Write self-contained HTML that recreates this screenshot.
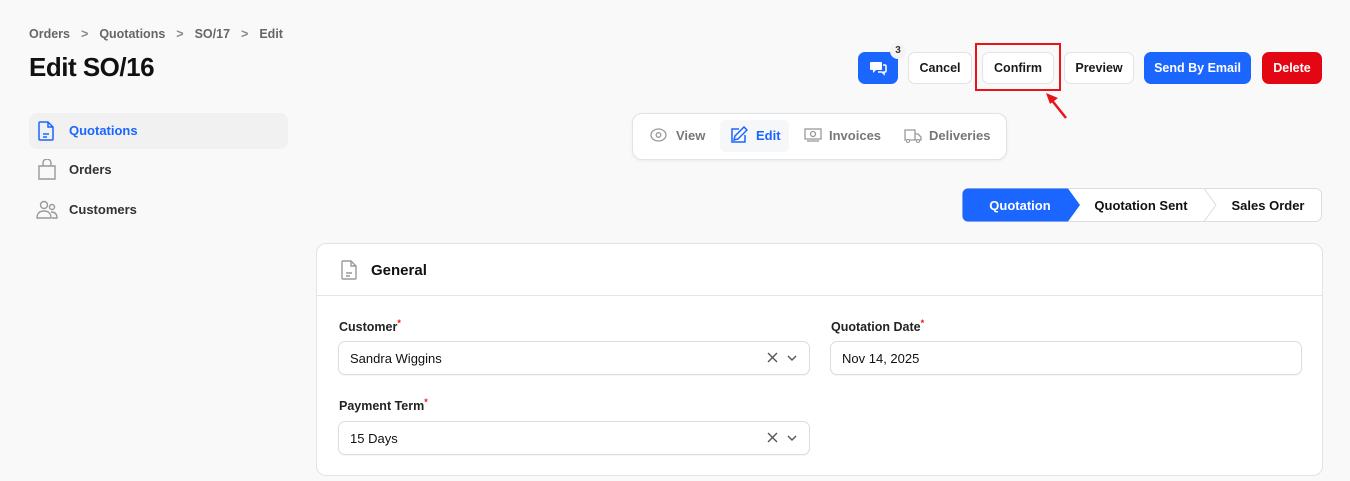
<!DOCTYPE html>
<html><head><style>
*{box-sizing:border-box;margin:0;padding:0}
body{width:1350px;height:481px;background:#f9f9f9;font-family:"Liberation Sans",sans-serif;position:relative;overflow:hidden;color:#111}
.a{position:absolute}
.btn{position:absolute;top:52px;height:32px;border:1px solid #e3e3e3;border-radius:7px;background:#fff;font-size:12.5px;font-weight:bold;display:flex;align-items:center;justify-content:center;color:#1a1a1a}
.lbl{position:absolute;font-size:12.5px;font-weight:bold;color:#222}
.lbl sup{color:#e11;font-size:9px}
.inp{position:absolute;height:34px;border:1px solid #ddd;border-radius:7px;background:#fff;font-size:13px;padding-left:11px;display:flex;align-items:center;box-shadow:0 1px 1px rgba(0,0,0,.04)}
.nav{position:absolute;left:69px;font-size:13px;font-weight:bold;color:#333}
.tab{position:absolute;top:129px;font-size:13px;font-weight:bold;color:#777;line-height:1}
</style></head><body>
<div class="a" style="left:29px;top:27px;font-size:12.5px;font-weight:bold;color:#666">Orders<span style="margin:0 11px;color:#888">&gt;</span>Quotations<span style="margin:0 11px;color:#888">&gt;</span>SO/17<span style="margin:0 11px;color:#888">&gt;</span>Edit</div>
<div class="a" style="left:29px;top:52px;font-size:26px;font-weight:bold;letter-spacing:-0.5px">Edit SO/16</div>

<div class="btn" style="left:858px;width:40px;background:#1a66ff;border-color:#1a66ff">
<svg width="18" height="16" viewBox="0 0 18 16"><path d="M2 2h10a1 1 0 0 1 1 1v6a1 1 0 0 1-1 1H7l-3 3v-3H2a1 1 0 0 1-1-1V3a1 1 0 0 1 1-1z" fill="#fff"/><path d="M14 5h2a1 1 0 0 1 1 1v5a1 1 0 0 1-1 1h-1v2l-2-2h-4" fill="none" stroke="#fff" stroke-width="1.5"/></svg></div>
<div class="a" style="left:890px;top:43px;width:16px;height:16px;border-radius:8px;background:#f3f3f3;font-size:10px;font-weight:bold;text-align:center;line-height:16px;color:#333">3</div>
<div class="btn" style="left:908px;width:64px">Cancel</div>
<div class="btn" style="left:982px;width:72px">Confirm</div>
<div class="a" style="left:975px;top:43px;width:86px;height:48px;border:2px solid #e8141a"></div>
<svg class="a" style="left:1040px;top:88px" width="32" height="34"><path d="M26 30L10 10" stroke="#e8141a" stroke-width="2.5"/><path d="M6 5l12 5-8 6z" fill="#e8141a"/></svg>
<div class="btn" style="left:1064px;width:70px">Preview</div>
<div class="btn" style="left:1144px;width:107px;background:#1a66ff;border-color:#1a66ff;color:#fff">Send By Email</div>
<div class="btn" style="left:1262px;width:60px;background:#e30613;border-color:#e30613;color:#fff">Delete</div>

<div class="a" style="left:29px;top:113px;width:259px;height:36px;background:#f1f1f1;border-radius:8px"></div>
<svg class="a" style="left:37px;top:120px" width="18" height="22" viewBox="0 0 18 22"><path d="M3 2h8l5 5v12a1 1 0 0 1-1 1H3a1 1 0 0 1-1-1V3a1 1 0 0 1 1-1z M11 2v5h5 M6 14h6 M6 17h4" fill="none" stroke="#1a66ff" stroke-width="1.5"/></svg>
<div class="nav" style="top:123px;color:#1a66ff">Quotations</div>
<svg class="a" style="left:37px;top:159px" width="20" height="22" viewBox="0 0 20 22"><path d="M2 7h16v13H2z M6 7V4a4 4 0 0 1 8 0v3" fill="none" stroke="#999" stroke-width="1.4"/></svg>
<div class="nav" style="top:162px">Orders</div>
<svg class="a" style="left:36px;top:199px" width="22" height="22" viewBox="0 0 22 22"><circle cx="8" cy="6" r="3.5" fill="none" stroke="#999" stroke-width="1.4"/><circle cx="16" cy="8" r="2.5" fill="none" stroke="#999" stroke-width="1.4"/><path d="M1 19c0-5 3-7 7-7s7 2 7 7z M15 13c4 0 6 2 6 6h-5" fill="none" stroke="#999" stroke-width="1.4"/></svg>
<div class="nav" style="top:202px">Customers</div>

<div class="a" style="left:632px;top:113px;width:375px;height:47px;background:#fff;border:1px solid #e3e3e3;border-radius:10px;box-shadow:0 1px 3px rgba(0,0,0,.06)"></div>
<div class="a" style="left:720px;top:120px;width:69px;height:32px;background:#f6f7f9;border-radius:6px"></div>
<svg class="a" style="left:650px;top:128px" width="17" height="14"><ellipse cx="8.5" cy="7" rx="7.5" ry="6" fill="none" stroke="#999" stroke-width="1.3"/><circle cx="8.5" cy="7" r="2.3" fill="none" stroke="#999" stroke-width="1.3"/></svg>
<div class="tab" style="left:676px">View</div>
<svg class="a" style="left:730px;top:126px" width="18" height="18" viewBox="0 0 18 18"><path d="M14 1l3 3-9 9-4 1 1-4z M9 3H2v13h13V9" fill="none" stroke="#1a66ff" stroke-width="1.5"/></svg>
<div class="tab" style="left:756px;color:#1a66ff">Edit</div>
<svg class="a" style="left:804px;top:127px" width="18" height="16"><rect x="1" y="2" width="16" height="10" fill="none" stroke="#999" stroke-width="1.3"/><circle cx="9" cy="7" r="2.5" fill="none" stroke="#999" stroke-width="1.3"/><path d="M3 14h12" stroke="#999" stroke-width="1.3"/></svg>
<div class="tab" style="left:829px">Invoices</div>
<svg class="a" style="left:904px;top:128px" width="18" height="16"><path d="M1 2h10v10H1z M11 6h3l3 3v3h-6" fill="none" stroke="#999" stroke-width="1.3"/><circle cx="4" cy="13" r="1.5" fill="#fff" stroke="#999"/><circle cx="14" cy="13" r="1.5" fill="#fff" stroke="#999"/></svg>
<div class="tab" style="left:929px">Deliveries</div>

<svg class="a" style="left:962px;top:188px" width="361" height="35">
<rect x="0.5" y="0.5" width="359" height="33" rx="6" fill="#fff" stroke="#ddd"/>
<path d="M6 0.5H106L118 17 106 33.5H6A5.5 5.5 0 0 1 0.5 28V6A5.5 5.5 0 0 1 6 0.5z" fill="#1a66ff"/>
<path d="M242 0.5L254 17 242 33.5" fill="none" stroke="#ddd"/>
<text x="58" y="22" text-anchor="middle" font-family="Liberation Sans" font-weight="bold" font-size="13" fill="#fff">Quotation</text>
<text x="179" y="22" text-anchor="middle" font-family="Liberation Sans" font-weight="bold" font-size="13" fill="#111">Quotation Sent</text>
<text x="306" y="22" text-anchor="middle" font-family="Liberation Sans" font-weight="bold" font-size="13" fill="#111">Sales Order</text>
</svg>

<div class="a" style="left:316px;top:243px;width:1007px;height:233px;background:#fff;border:1px solid #e3e3e3;border-radius:10px"></div>
<div class="a" style="left:317px;top:295px;width:1005px;height:1px;background:#e5e5e5"></div>
<svg class="a" style="left:340px;top:259px" width="18" height="22" viewBox="0 0 18 22"><path d="M3 2h8l5 5v12a1 1 0 0 1-1 1H3a1 1 0 0 1-1-1V3a1 1 0 0 1 1-1z M11 2v5h5 M6 14h6 M6 17h4" fill="none" stroke="#999" stroke-width="1.4"/></svg>
<div class="a" style="left:371px;top:262px;font-size:15px;font-weight:bold">General</div>

<div class="lbl" style="left:339px;top:318px">Customer<sup>*</sup></div>
<div class="inp" style="left:338px;top:341px;width:472px">Sandra Wiggins</div>
<div class="lbl" style="left:831px;top:318px">Quotation Date<sup>*</sup></div>
<div class="inp" style="left:830px;top:341px;width:472px">Nov 14, 2025</div>
<div class="lbl" style="left:339px;top:397px">Payment Term<sup>*</sup></div>
<div class="inp" style="left:338px;top:421px;width:472px">15 Days</div>
<svg class="a" style="left:766px;top:351px" width="36" height="14"><path d="M2 2l9 9M11 2l-9 9" stroke="#555" stroke-width="1.4"/><path d="M22 5l4 4 4-4" fill="none" stroke="#555" stroke-width="1.4"/></svg>
<svg class="a" style="left:766px;top:431px" width="36" height="14"><path d="M2 2l9 9M11 2l-9 9" stroke="#555" stroke-width="1.4"/><path d="M22 5l4 4 4-4" fill="none" stroke="#555" stroke-width="1.4"/></svg>
</body></html>
